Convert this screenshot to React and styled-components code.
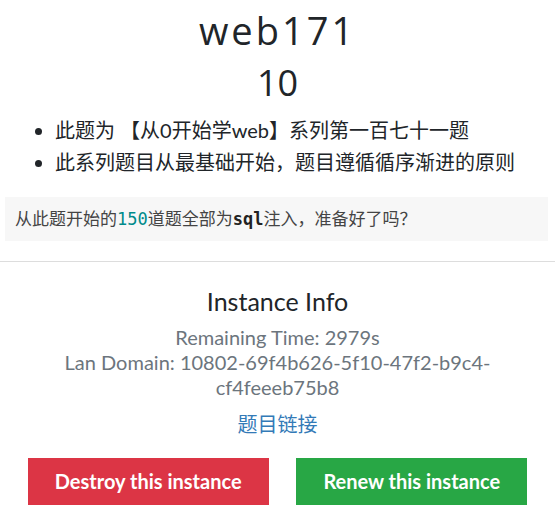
import React from "react";
import styled, { createGlobalStyle } from "styled-components";

const Global = createGlobalStyle`
  html, body { margin: 0; padding: 0; background: #fff; }
  body {
    font-family: Lato, "Noto Sans CJK SC", sans-serif;
    color: #212529;
    width: 555px;
  }
`;

const Page = styled.div`
  display: flex;
  flex-direction: column;
  padding-top: 6px;
`;

const Title = styled.h2`
  margin: 0;
  text-align: center;
  font-family: "Open Sans", Lato, sans-serif;
  font-weight: 400;
  font-size: 38px;
  letter-spacing: 3px;
  line-height: 48px;
  color: #212529;
`;

const Value = styled.h3`
  margin: 6px 0 0;
  text-align: center;
  font-family: "Open Sans", Lato, sans-serif;
  font-weight: 400;
  font-size: 36px;
  line-height: 46px;
  color: #212529;
`;

const List = styled.ul`
  margin: 8px 0 0;
  padding-left: 55px;
  font-size: 20px;
  line-height: 32px;
  font-family: Lato, "Noto Sans CJK SC", sans-serif;
`;

const Code = styled.pre`
  margin: 19px 7px 0 5px;
  padding: 10px;
  background: #f7f7f7;
  font-family: "DejaVu Sans Mono", "Noto Sans CJK SC", monospace;
  font-size: 17px;
  line-height: 24px;
  color: #444;
  white-space: pre-wrap;
`;

const Num = styled.span`
  color: #008b8b;
`;

const Bold = styled.b`
  font-weight: 700;
  color: #222;
`;

const Rule = styled.hr`
  margin: 20px 0 0;
  border: 0;
  border-top: 1px solid #ddd;
`;

const Info = styled.section`
  display: flex;
  flex-direction: column;
  align-items: center;
  text-align: center;
  padding: 24px 20px 0;
`;

const InfoTitle = styled.h4`
  margin: 0 0 9px;
  font-weight: 400;
  font-size: 25px;
  line-height: 30px;
  color: #212529;
`;

const Muted = styled.p`
  margin: 0;
  font-size: 20px;
  line-height: 25px;
  color: #6c757d;
`;

const Link = styled.a`
  margin-top: 9px;
  font-size: 20px;
  line-height: 30px;
  color: #337ab7;
  text-decoration: none;
  font-family: Lato, "Noto Sans CJK SC", sans-serif;
`;

const Actions = styled.div`
  display: flex;
  justify-content: space-evenly;
  margin-top: 19px;
`;

const Button = styled.button`
  border: 0;
  border-radius: 0;
  padding: 11px 27px;
  font-family: Lato, sans-serif;
  font-weight: 700;
  font-size: 20px;
  line-height: 25px;
  color: #fff;
  background: ${(p) => (p.$variant === "danger" ? "#dc3545" : "#28a745")};
  cursor: pointer;
`;

export default function App() {
  return (
    <>
      <Global />
      <Page>
        <Title>web171</Title>
        <Value>10</Value>
        <List>
          <li>此题为 【从0开始学web】系列第一百七十一题</li>
          <li>此系列题目从最基础开始，题目遵循循序渐进的原则</li>
        </List>
        <Code>
          从此题开始的<Num>150</Num>道题全部为<Bold>sql</Bold>注入，准备好了吗？
        </Code>
        <Rule />
        <Info>
          <InfoTitle>Instance Info</InfoTitle>
          <Muted>Remaining Time: 2979s</Muted>
          <Muted>Lan Domain: 10802-69f4b626-5f10-47f2-b9c4-cf4feeeb75b8</Muted>
          <Link href="#">题目链接</Link>
        </Info>
        <Actions>
          <Button $variant="danger">Destroy this instance</Button>
          <Button $variant="success">Renew this instance</Button>
        </Actions>
      </Page>
    </>
  );
}
